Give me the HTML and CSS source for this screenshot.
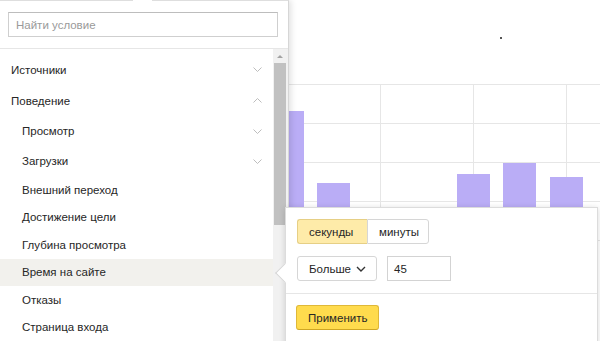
FILE: index.html
```html
<!DOCTYPE html>
<html lang="ru">
<head>
<meta charset="utf-8">
<title>Условия сегментации</title>
<link rel="stylesheet" href="styles.css">
</head>
<body>
<div class="page">
  <div class="chart-area">
    <div class="chart-top"><span class="speck"></span></div>
    <div class="chart">
      <div class="bars">
        <div class="slot"><div class="bar" style="height:100px"></div></div>
        <div class="slot"><div class="bar" style="height:129px"></div></div>
        <div class="slot"><div class="bar" style="height:57px"></div></div>
        <div class="slot"><div class="bar" style="height:0"></div></div>
        <div class="slot"><div class="bar" style="height:0"></div></div>
        <div class="slot"><div class="bar" style="height:66px"></div></div>
        <div class="slot"><div class="bar" style="height:77px"></div></div>
        <div class="slot"><div class="bar" style="height:63px"></div></div>
      </div>
    </div>
  </div>

  <div class="panel">
    <div class="search-wrap">
      <input class="search" type="text" placeholder="Найти условие">
    </div>
    <div class="panel-body">
      <ul class="list">
        <li class="item top"><span>Источники</span>
          <svg class="chev" width="9" height="5" viewBox="0 0 9 5"><polyline points="0.5,0.5 4.5,4.5 8.5,0.5"/></svg></li>
        <li class="item top"><span>Поведение</span>
          <svg class="chev" width="9" height="5" viewBox="0 0 9 5"><polyline points="0.5,4.5 4.5,0.5 8.5,4.5"/></svg></li>
        <li class="item sub"><span>Просмотр</span>
          <svg class="chev" width="9" height="5" viewBox="0 0 9 5"><polyline points="0.5,0.5 4.5,4.5 8.5,0.5"/></svg></li>
        <li class="item sub"><span>Загрузки</span>
          <svg class="chev" width="9" height="5" viewBox="0 0 9 5"><polyline points="0.5,0.5 4.5,4.5 8.5,0.5"/></svg></li>
        <li class="item leaf">Внешний переход</li>
        <li class="item leaf">Достижение цели</li>
        <li class="item leaf">Глубина просмотра</li>
        <li class="item leaf active">Время на сайте</li>
        <li class="item leaf">Отказы</li>
        <li class="item leaf">Страница входа</li>
      </ul>
      <div class="scrollbar">
        <div class="scroll-up"><span class="tri"></span></div>
        <div class="thumb"></div>
      </div>
    </div>
  </div>

  <div class="popover">
    <div class="pop-main">
      <div class="segmented">
        <span class="seg selected">секунды</span>
        <span class="seg">минуты</span>
      </div>
      <div class="cond-row">
        <span class="select">Больше
          <svg class="sel-chev" width="10" height="6" viewBox="0 0 10 6"><polyline points="1,1 5,5 9,1"/></svg>
        </span>
        <span class="value">45</span>
      </div>
    </div>
    <div class="pop-foot">
      <span class="apply">Применить</span>
    </div>
  </div>
</div>
</body>
</html>
```

FILE: styles.css
```css
* { box-sizing: border-box; }
html, body { margin: 0; padding: 0; background: #fff; }
body {
  font-family: "Liberation Sans", Arial, sans-serif;
  font-size: 11.5px;
  color: #262626;
}
.page {
  position: relative;
  width: 600px;
  height: 341px;
  overflow: hidden;
}

/* chart */
.chart-area { margin-left: 194px; }
.chart-top { height: 84px; padding-top: 37px; padding-left: 306px; }
.speck { display: block; width: 2px; height: 2px; background: #555; }
.chart {
  height: 157px;
  background-image:
    linear-gradient(#e6e6e6 1px, transparent 1px),
    linear-gradient(90deg, #e6e6e6 1px, transparent 1px);
  background-size: 100% 39px, 93px 100%;
}
.bars {
  display: flex;
  align-items: flex-end;
  height: 156px;
  padding-left: 23.25px;
}
.slot { width: 46.5px; display: flex; justify-content: center; flex: none; }
.bar { width: 33px; background: #baadf6; }

/* panel */
.panel {
  position: absolute;
  left: 0;
  top: 0;
  width: 289px;
  height: 341px;
  background: #fff;
  border-top: 1px solid #dedede;
  border-right: 1px solid #d6d6d6;
  box-shadow: 2px 0 6px rgba(0,0,0,0.12);
}
.panel::before {
  content: "";
  position: absolute;
  left: 133px;
  top: -1px;
  width: 19px;
  height: 1px;
  background: #fff;
}
.search-wrap {
  padding: 11px 10px 11px 8px;
  border-bottom: 1px solid #e6e6e6;
}
.search {
  display: block;
  width: 270px;
  height: 25px;
  margin: 0;
  border: 1px solid #cfcfcf;
  border-top-color: #bdbdbd;
  padding: 0 7px;
  font: inherit;
  font-size: 11.5px;
  color: #262626;
  outline: none;
}
.search::placeholder { color: #9a9a9a; }

.panel-body { display: flex; height: 292px; }
.list {
  list-style: none;
  margin: 0;
  padding: 5px 0 0;
  width: 273px;
  flex: none;
}
.item {
  display: flex;
  align-items: center;
  justify-content: space-between;
  padding-right: 11px;
}
.item.top { height: 31px; padding-left: 11px; }
.item.sub { height: 30px; padding-left: 22px; }
.item.leaf { height: 27.5px; padding-left: 22px; }
.item.active { background: #f2f1ed; }
.chev { display: block; }
.chev polyline { fill: none; stroke: #bdbdbd; stroke-width: 1; }

.scrollbar {
  width: 15px;
  flex: none;
  background: #f1f1f1;
  padding: 0 2px 0 1px;
}
.scroll-up {
  height: 14px;
  display: flex;
  justify-content: center;
  align-items: center;
}
.tri {
  width: 0;
  height: 0;
  border-left: 3.5px solid transparent;
  border-right: 3.5px solid transparent;
  border-bottom: 3px solid #a3a3a3;
}
.thumb { height: 162px; background: #c1c1c1; }

/* popover */
.popover {
  position: absolute;
  left: 285px;
  top: 207px;
  width: 313px;
  height: 150px;
  background: #fff;
  border: 1px solid #dcdcdc;
  box-shadow: 0 1px 6px rgba(0,0,0,0.15);
}
.popover::before {
  content: "";
  position: absolute;
  left: -8px;
  top: 57.5px;
  width: 13px;
  height: 13px;
  background: #fff;
  border-left: 1px solid #d6d6d6;
  border-bottom: 1px solid #d6d6d6;
  transform: rotate(45deg);
}
.pop-main {
  padding: 11px 11px 12px;
  border-bottom: 1px solid #e6e6e6;
}
.segmented { display: flex; }
.seg {
  height: 25px;
  display: flex;
  align-items: center;
  padding: 0 11px;
  border: 1px solid #d6d6d6;
  background: #fff;
}
.seg.selected {
  background: #feeba9;
  border-color: #e6cf85;
  border-radius: 3px 0 0 3px;
  border-right: 0;
  width: 70px;
}
.seg:last-child { border-radius: 0 3px 3px 0; width: 62px; }
.cond-row { display: flex; gap: 10px; margin-top: 12px; }
.select {
  width: 80px;
  height: 25px;
  display: flex;
  align-items: center;
  justify-content: space-between;
  padding: 0 10px 0 11px;
  border: 1px solid #d6d6d6;
  border-radius: 3px;
}
.sel-chev polyline { fill: none; stroke: #333; stroke-width: 1.4; }
.value {
  width: 64px;
  height: 25px;
  display: flex;
  align-items: center;
  padding: 0 6px;
  border: 1px solid #d3d3d3;
}
.pop-foot { padding: 11px 10px; }
.apply {
  display: inline-flex;
  align-items: center;
  height: 25px;
  width: 83px;
  padding: 0 11px;
  background: #ffdb4d;
  border: 1px solid #dfb838;
  border-bottom-color: #cfa623;
  border-radius: 3px;
}
```
